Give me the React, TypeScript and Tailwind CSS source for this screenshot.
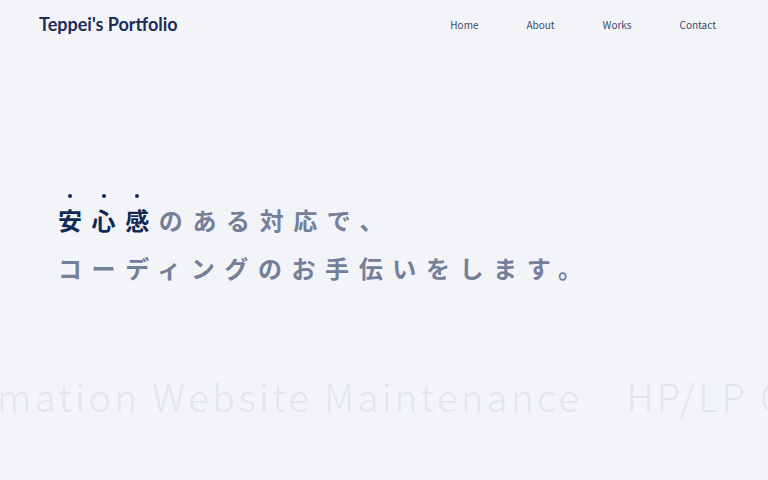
import React from "react";

const navItems = ["Home", "About", "Works", "Contact"];

const Dotted: React.FC<{ ch: string }> = ({ ch }) => (
  <span className="relative inline-block">
    {ch}
    <span className="absolute left-[12px] top-[-2px] h-[4px] w-[4px] -translate-x-1/2 rounded-full bg-[#0f2a57]" />
  </span>
);

const App: React.FC = () => {
  return (
    <div className="min-h-screen w-full overflow-hidden bg-[#f3f4f8]">
      <header className="flex h-12 items-center justify-between pl-[39px] pr-[52px]">
        <a
          href="#"
          className="text-[18px] font-bold text-[#1b2d58]"
          style={{ fontFamily: "Lato, sans-serif" }}
        >
          Teppei's Portfolio
        </a>
        <nav
          className="flex items-center gap-12 text-[10px] text-[#3a4a6c]"
          style={{ fontFamily: "'Noto Sans CJK JP', 'Noto Sans', sans-serif" }}
        >
          {navItems.map((item) => (
            <a key={item} href="#">
              {item}
            </a>
          ))}
        </nav>
      </header>

      <main>
        <section
          className="pl-[58px] pt-[148px] text-[24px] font-bold leading-[48px] tracking-[0.4em] text-[#74809a]"
          style={{ fontFamily: "'Noto Sans CJK JP', sans-serif" }}
        >
          <p>
            <span className="text-[#0f2a57]">
              <Dotted ch="安" />
              <Dotted ch="心" />
              <Dotted ch="感" />
            </span>
            のある対応で、
          </p>
          <p>コーディングのお手伝いをします。</p>
        </section>

        <div
          className="-ml-[3px] mt-[85px] flex gap-[44px] whitespace-nowrap text-[38px] font-light leading-none tracking-[0.09em] text-[#e3e5ee]"
          style={{ fontFamily: "'Noto Sans CJK JP', sans-serif" }}
        >
          <span>mation Website Maintenance</span>
          <span>HP/LP Coding</span>
          <span>Web Automation</span>
        </div>
      </main>
    </div>
  );
};

export default App;
